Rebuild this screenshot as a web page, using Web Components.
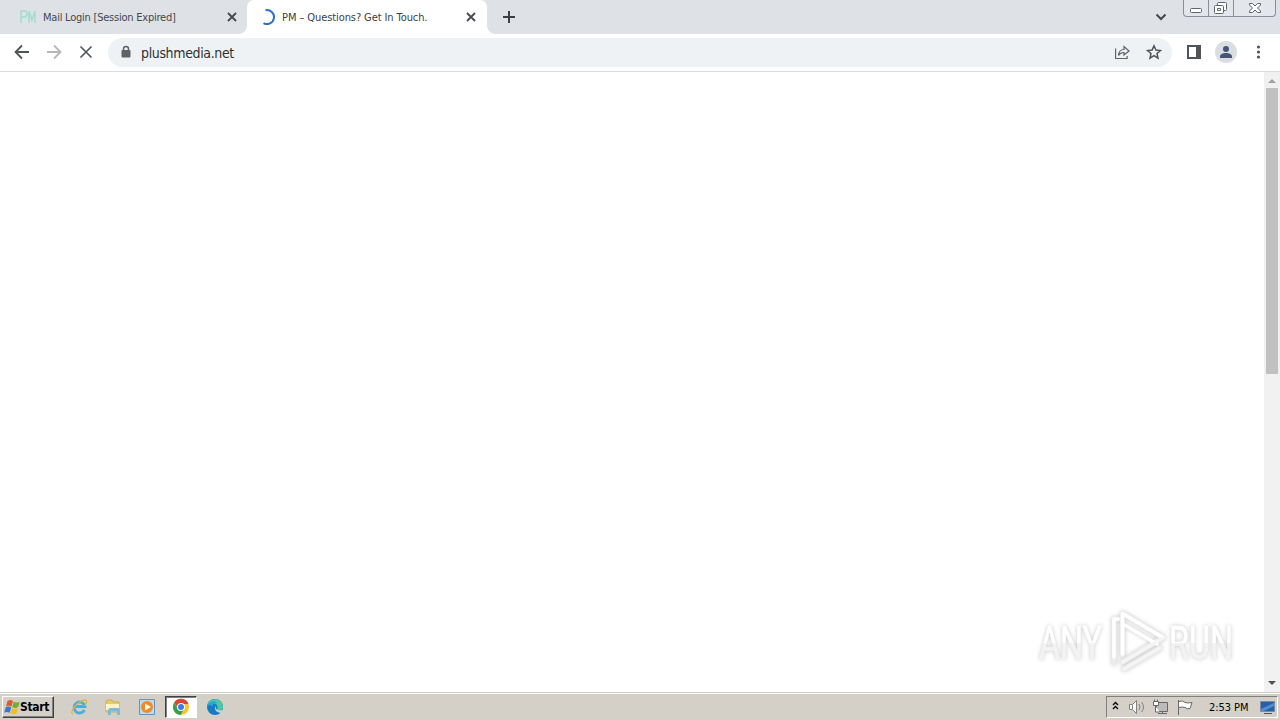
<!DOCTYPE html>
<html lang="en">
<head>
<meta charset="utf-8">
<title>Desktop</title>
<style>
  html, body { margin: 0; height: 100%; overflow: hidden; }
  body { background: #fff; font-family: "DejaVu Sans Condensed", "DejaVu Sans", sans-serif; font-stretch: condensed; }
</style>
</head>
<body>
<desk-top>
  <tab-strip slot="tabs">
    <browser-tab label="Mail Login [Session Expired]" style="--w: 248px; --start: 20px; --gap: 7px; --track: -.23px">
      <svg slot="icon" width="16" height="16" fill="none" stroke="#a3dccb" stroke-width="1.5"><path d="M1 14V2h3q3 0 3 3t-3 3H1M9 14V2l3 9 3-9v12"/></svg>
    </browser-tab>
    <browser-tab active label="PM – Questions? Get In Touch." style="--w: 240px; --start: 12px; --gap: 7px; --track: -.09px">
      <svg slot="icon" width="16" height="16" fill="none" stroke="#2c6fca" stroke-width="2"><path d="M6.500 1.200A7 7 0 1 1 4.500 14.100"/></svg>
    </browser-tab>
  </tab-strip>
  <tool-bar slot="toolbar" url="plushmedia.net"></tool-bar>
  <page-view slot="page"><any-run></any-run></page-view>
  <task-bar slot="taskbar" time="2:53 PM"></task-bar>
</desk-top>

<script>
(function() {

  function define(name, render) {
    customElements.define(name, class extends HTMLElement {
      constructor() {
        super();
        this.attachShadow({ mode: 'open' });
      }
      connectedCallback() {
        this.shadowRoot.innerHTML = render(this);
      }
    });
  }

  define('desk-top', () => `
    <style>
      :host { display: grid; grid-template-rows: 34px 38px 620px 28px; width: 1280px; height: 720px; }
    </style>
    <slot name="tabs"></slot>
    <slot name="toolbar"></slot>
    <slot name="page"></slot>
    <slot name="taskbar"></slot>
  `);

  define('browser-tab', el => `
    <style>
      :host {
        display: flex; align-items: center; box-sizing: border-box;
        width: var(--w); height: 34px; padding: 0 10px 0 var(--start);
        color: #45484d; font-size: 11px; letter-spacing: var(--track);
      }
      :host([active]) {
        position: relative; width: 240px; margin-left: -1px;
        background: #fff; border-radius: 7px 7px 0 0; color: #3c4043;
      }
      :host([active])::before, :host([active])::after {
        content: ''; position: absolute; bottom: 0; width: 8px; height: 8px;
      }
      :host([active])::before { left: -8px; background: radial-gradient(circle at 0 0, transparent 7.5px, #fff 8px); }
      :host([active])::after { right: -8px; background: radial-gradient(circle at 100% 0, transparent 7.5px, #fff 8px); }
      span { margin: 1px 0 0 var(--gap); white-space: nowrap; flex: 1; line-height: 16px; }
      .close { display: block; }
    </style>
    <slot name="icon"></slot>
    <span>${ el.getAttribute('label') }</span>
    <svg class="close" width="12" height="12" fill="none" stroke="#45484d" stroke-width="1.8"><path d="M2 2l8 8M10 2L2 10"/></svg>
  `);

  define('tab-strip', () => `
    <style>
      :host { display: flex; background: #dee1e6; }
      .plus { margin: 10px 0 0 15px; }
      .down { margin: 12px 16px 0 auto; }
      .window { display: flex; box-sizing: border-box; width: 93px; height: 17px; margin-right: 4px;
        border: 1px solid #8b8e96; border-top: 0; border-radius: 0 0 4px 4px; background: #e3e6eb; }
      .window svg { display: block; }
      .window svg + svg { border-left: 1px solid #8b8e96; }
    </style>
    <slot></slot>
    <svg class="plus" width="14" height="14" stroke="#3c4043" stroke-width="2"><path d="M7 1v12M1 7h12"/></svg>
    <svg class="down" width="12" height="10" fill="none" stroke="#45484d" stroke-width="2"><path d="M1.500 2.500L6 7l4.500-4.500"/></svg>
    <div class="window">
      <svg width="24" height="16" fill="#fff" stroke="#62656c"><rect x="6.500" y="8.500" width="11" height="4" rx="1"/></svg>
      <svg width="24" height="16" fill="#fff" stroke="#62656c"><rect x="8.500" y="2.500" width="9" height="8" rx="1"/><rect x="5.500" y="5.500" width="9" height="8" rx="1"/><path d="M8.500 8.500h3v2h-3z"/></svg>
      <svg width="41" height="16" fill="#fff" stroke="#62656c"><path d="M15.500 3.500h3l2.500 2.500 2.500-2.500h3v1.500L23.500 8l3 3v1.500h-3L21 10l-2.500 2.500h-3V11l3-3-3-3z"/></svg>
    </div>
  `);

  define('tool-bar', el => `
    <style>
      :host { display: flex; align-items: center; box-sizing: border-box; height: 38px;
        padding: 0 14px 1px; background: #fff; border-bottom: 1px solid #dadcde; }
      svg { display: block; flex: none; }
      .nav { display: flex; gap: 16px; width: 94px; }
      .box { display: flex; align-items: center; box-sizing: border-box; width: 1064px; height: 29px;
        margin-top: 1px; padding: 0 10px 1px 12px; border-radius: 15px; background: #eff2f4; }
      .url { flex: 1; margin: 2px 0 0 9px; color: #303134; font-size: 14px; line-height: 18px; letter-spacing: -.36px; }
      .star { margin-left: 16px; }
      .panel { margin-left: 14px; }
      .user { margin-left: 13px; }
      .menu { margin-left: 13px; }
    </style>
    <div class="nav">
      <svg width="16" height="16" fill="none" stroke="#505357" stroke-width="1.800"><path d="M15 8H2M8 1.500L1.500 8 8 14.500"/></svg>
      <svg width="16" height="16" fill="none" stroke="#b5b7ba" stroke-width="1.800"><path d="M1 8h13M8 1.500L14.500 8 8 14.500"/></svg>
      <svg width="16" height="16" fill="none" stroke="#505357" stroke-width="1.6"><path d="M2.500 2.500l11 11M13.500 2.500l-11 11"/></svg>
    </div>
    <div class="box">
      <svg width="12" height="14"><path d="M3.500 6V4a2.500 2.500 0 0 1 5 0v2" fill="none" stroke="#5f6368" stroke-width="1.500"/><rect x="1.500" y="5" width="9" height="7.500" rx="1" fill="#5f6368"/></svg>
      <span class="url">${ el.getAttribute('url') }</span>
      <svg width="16" height="16" fill="none" stroke="#5f6368" stroke-width="1.2"><path d="M1.600 4.500v10h11.500V12M4.500 11.500c.3-4 2.300-6 5.500-6V2.500L15 7l-5 4V8.500c-2.500 0-4.200.8-5.500 3z"/></svg>
      <svg class="star" width="16" height="16" fill="none" stroke="#505357" stroke-width="1.500"><path d="M8 1.800l1.900 4.200 4.600.5-3.500 3 1 4.600-4-2.400-4 2.400 1-4.600-3.500-3 4.600-.5z"/></svg>
    </div>
    <svg class="panel" width="16" height="16"><path fill="#505357" fill-rule="evenodd" d="M1 1h14v14H1zM3 3v10h7V3z"/></svg>
    <svg class="user" width="22" height="22"><circle cx="11" cy="11" r="11" fill="#dadde2"/><circle cx="11" cy="8" r="3" fill="#465574"/><path d="M5 17v-1.500C5 13 8.500 12 11 12s6 1 6 3.500V17z" fill="#465574"/></svg>
    <svg class="menu" width="16" height="16" fill="#505357"><circle cx="8.500" cy="3" r="1.600"/><circle cx="8.500" cy="8" r="1.600"/><circle cx="8.500" cy="13" r="1.600"/></svg>
  `);

  define('page-view', () => `
    <style>
      :host { display: flex; background: #fff; }
      .page { display: flex; flex: 1; align-items: flex-end; justify-content: flex-end; padding: 0 26px 17px 0; }
      .scroll { display: flex; flex-direction: column; align-items: center; width: 16px; background: #f1f1f1; }
      .thumb { width: 12px; height: 286px; background: #c1c1c1; }
      svg { display: block; }
      svg:last-child { margin-top: auto; }
    </style>
    <div class="page"><slot></slot></div>
    <div class="scroll">
      <svg width="16" height="16"><path fill="#a0a0a0" d="M4 11l4-4 4 4z"/></svg>
      <div class="thumb"></div>
      <svg width="16" height="16"><path fill="#505050" d="M4 5l4 4 4-4z"/></svg>
    </div>
  `);

  // translucent watermark
  define('any-run', () => `
    <style>
      :host { display: block; width: 206px; height: 70px; }
      svg { display: block; overflow: visible; filter: drop-shadow(0 0 2px rgba(0, 0, 0, .22)); }
      text { font: 46px "Roboto", "Liberation Sans", sans-serif; }
    </style>
    <svg width="206" height="70">
      <defs>
        <linearGradient id="fade" gradientUnits="userSpaceOnUse" x1="0" y1="0" x2="0" y2="70">
          <stop offset=".54" stop-color="#fff"/><stop offset=".54" stop-color="#f3f3f3"/>
        </linearGradient>
      </defs>
      <g fill="url(#fade)" stroke="url(#fade)" stroke-width=".6">
        <text x="7" y="54" textLength="63" lengthAdjust="spacingAndGlyphs">ANY</text>
        <text x="137" y="54" textLength="64" lengthAdjust="spacingAndGlyphs">RUN</text>
      </g>
      <g fill="none" stroke-linejoin="round" stroke-linecap="round">
        <g stroke="#ececec" stroke-width="5">
          <path d="M90.500 50V8.500L131 32.500M82 58V14h4"/>
          <path d="M131 32.500L90.500 57M92 64l36-21"/>
        </g>
        <g stroke="#fff" stroke-width="3.500">
          <path d="M90.500 49V8.500L131 32.500M82 52V14h4M91 19l34 20"/>
        </g>
        <path stroke="#f5f5f5" stroke-width="3" d="M131 33L90.500 57M92 64l36-21"/>
      </g>
    </svg>
  `);

  define('task-bar', el => `
    <style>
      :host { display: flex; box-sizing: border-box; height: 28px; padding: 2px 2px 0 2px;
        background: #d4d0c8; border-top: 1px solid #d4d0c8; box-shadow: inset 0 1px #fff; color: #000; font-size: 11px; }
      svg { display: block; flex: none; }
      .start { display: flex; align-items: center; box-sizing: border-box; width: 52px; height: 22px; margin-top: 1px;
        padding-left: 1px; border: 1px solid; border-color: #fff #404040 #404040 #fff; box-shadow: inset -1px -1px #808080;
        font-size: 12px; font-weight: bold; letter-spacing: -.3px; }
      .apps { display: flex; margin: 1px 0 0 9px; gap: 2px; }
      .app { display: grid; place-items: center; box-sizing: border-box; width: 32px; height: 22px; }
      .app[pressed] { background: #fff; border: 1px solid; border-color: #404040 #fff #fff #404040; box-shadow: inset 1px 1px #808080; }
      .tray { display: flex; align-items: center; box-sizing: border-box; width: 172px; height: 22px; margin: 1px 0 0 auto;
        border: 1px solid; border-color: #808080 #fff #fff #808080; }
      .time { margin-left: 14px; width: 43px; white-space: nowrap; letter-spacing: -.05px; }
    </style>
    <div class="start">
      <svg width="16" height="18"><path fill="#e45a2b" d="M3.500 3q3-2 5.500 0L7.500 8.500q-3-1.500-5.500 0z"/><path fill="#73ad35" d="M9.700 3.500q3 2 6 0l-1.500 5.500q-3 2-6 0z"/><path fill="#3579c9" d="M1.700 9.300q3-1.500 5.500 0l-1.500 5.500q-3-1.500-5.500 0z"/><path fill="#f3bd28" d="M8 10q3 2 6 0l-1.500 5.500q-3 1.500-6 0z"/></svg>
      <span>Start</span>
    </div>
    <div class="apps">
      <div class="app"><svg width="18" height="18" fill="none"><path d="M14.500 12A5.500 5.500 0 1 1 15 8.500H4" stroke="#46aee4" stroke-width="2.800"/><path d="M3 16C-2 15 9 2 15 2c3 0 1 4 0 6" stroke="#dfb63c" stroke-width="1.300"/></svg></div>
      <div class="app"><svg width="18" height="18"><path fill="#e9cb68" stroke="#c5a144" stroke-width=".7" d="M2 4l1-2h5l1 2h6v10H2z"/><path fill="#fff4bd" d="M2 6h13v6H2z"/><path fill="#7dbbd5" d="M4 17v-5q1-2 2-2h8q2 0 2 2v5h-3v-4H7v4z"/></svg></div>
      <div class="app"><svg width="18" height="18"><path fill="#b9dcf4" stroke="#5798ce" d="M1.500 1.500h15v15h-15z"/><circle cx="9" cy="9" r="6" fill="#f38a20"/><path fill="#fff" d="M7 5.500l6 3.500-6 3.500z"/></svg></div>
      <div class="app" pressed><svg width="18" height="18"><circle cx="9" cy="9" r="8" fill="#f9c52a"/><path fill="#dc4435" d="M2 5a8 8 0 0 1 14.500 1H9L6 10z"/><path fill="#33a052" d="M2 5a8 8 0 0 0 6.500 12L12 11 9 12 6 11z"/><circle cx="9" cy="9" r="4" fill="#fff"/><circle cx="9" cy="9" r="3" fill="#397de4"/></svg></div>
      <div class="app"><svg width="18" height="18"><circle cx="9" cy="9" r="8" fill="#1779c6"/><path fill="#4dc8a1" d="M2 5C6-1 17 0 17 9q0 4-6 3 2-6-4-7-3 0-5 2z"/><path fill="#22a9da" d="M2 6Q6 1 12 5q-4-1-6 4-2-4-5 0z"/><path fill="#d4d0c8" d="M10 8q-2 5 7 4v2l-2 1q-7-1-6-6z"/></svg></div>
    </div>
    <div class="tray">
      <svg width="18" height="18" fill="none" stroke="#000" stroke-width="1.300"><path d="M6 7l2.500-2.500L11 7M6 11l2.500-2.500L11 11"/></svg>
      <svg width="22" height="18" fill="#fff" stroke="#808080"><path d="M4.500 6.500h3l4-4v13l-4-4h-3z"/><path fill="none" d="M14 6q2 3 0 6M16.500 4q4 5 0 10M7.500 7v4"/></svg>
      <svg width="24" height="18" fill="#fff" stroke="#686868"><path fill="#bbb" d="M9.500 4.500h11v9h-11z"/><path d="M11 15.500h9M15.500 14v1M6.500 3.500h5v4h-5zM7.500 1.500v2M10.500 1.500v2M8.500 8v6h4" /></svg>
      <svg width="24" height="18" fill="#fff" stroke="#686868"><path d="M7.500 2v15M8 3.500q4-1.500 6 1 3 1 7 0l-2 6q-3 1-5-1-3-1-6 0"/></svg>
      <span class="time">${ el.getAttribute('time') }</span>
      <svg width="18" height="18" style="margin-left: 7px"><path fill="#2860a8" stroke="#718eae" d="M1.500 3.500h14v10h-14z"/><path fill="#4f90cf" d="M2 11L15 5v3L5 13H2z"/><path stroke="#46576c" d="M5 15.500h8"/></svg>
    </div>
  `);

}());
</script>
</body>
</html>
